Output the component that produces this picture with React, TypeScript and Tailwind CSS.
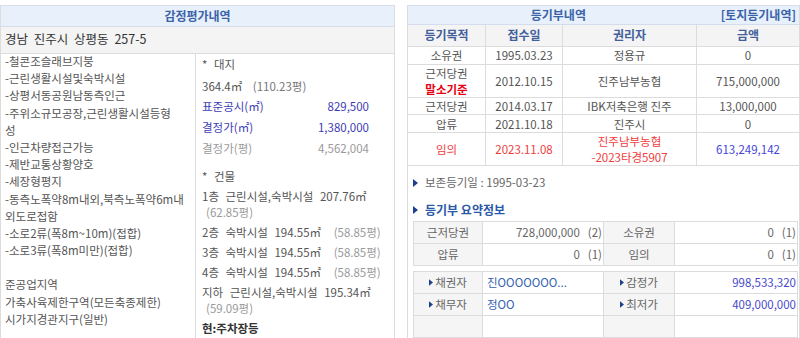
const leftLines = [
  '-철콘조슬래브지붕',
  '-근린생활시설및숙박시설',
  '-상평서동공원남동측인근',
  '-주위소규모공장,근린생활시설등형',
  '성',
  '-인근차량접근가능',
  '-제반교통상황양호',
  '-세장형평지',
  '-동측노폭약8m내외,북측노폭약6m내',
  '외도로접함',
  '-소로2류(폭8m~10m)(접합)',
  '-소로3류(폭8m미만)(접합)',
  '',
  '준공업지역',
  '가축사육제한구역(모든축종제한)',
  '시가지경관지구(일반)',
];

const registry = [
  { kind: '소유권', date: '1995.03.23', holder: '정용규', amount: '0', h: 'h-[23px]' },
  { kind: '근저당권', date: '2012.10.15', holder: '진주남부농협', amount: '715,000,000', h: 'h-[33px]', base: true },
  { kind: '근저당권', date: '2014.03.17', holder: 'IBK저축은행 진주', amount: '13,000,000', h: 'h-[22px]' },
  { kind: '압류', date: '2021.10.18', holder: '진주시', amount: '0', h: 'h-[22px]' },
];

function Arrow({ className = 'w-[5px] h-[8px]' }: { className?: string }) {
  return (
    <svg viewBox="0 0 5 8" className={className}>
      <path d="M0 0 L5 4 L0 8 Z" fill="#1d3f8c" />
    </svg>
  );
}

export default function App() {
  return (
    <div className="w-[800px] h-[338px] overflow-hidden bg-white pt-[5px] font-['Noto_Sans_CJK_KR',sans-serif] text-[11.5px] text-[#555]">
      <div className="flex h-full">
        {/* 감정평가내역 */}
        <div className="w-[395px] shrink-0 border-x border-[#dcdcdc] flex flex-col">
          <div className="h-[22px] bg-[#e8f0fb] border-y border-[#d3ddec] flex items-center justify-center text-[12px] font-bold text-[#3a63a8]">
            감정평가내역
          </div>
          <div className="h-[28px] bg-[#f4f4f4] border-b border-[#dcdcdc] flex items-center pl-[4px] text-[12.5px] text-[#333] [word-spacing:3px]">
            경남 진주시 상평동 257-5
          </div>
          <div className="flex flex-1">
            <div className="w-[195px] shrink-0 border-r border-[#dcdcdc] pl-[4px] -mt-[1px] leading-[17.2px] whitespace-nowrap">
              {leftLines.map((line, i) => (
                <div key={i} className="h-[17.2px]">
                  {line}
                </div>
              ))}
            </div>
            <div className="flex-1 pl-[6px] leading-[16px] whitespace-nowrap [word-spacing:4px]">
              <div className="py-[2px]">* 대지</div>
              <div className="py-[2px] mt-[2px]">
                364.4㎡ <span className="ml-[4px] text-[#777]">(110.23평)</span>
              </div>
              <div className="py-[2px] w-[167px] flex justify-between text-[#3c3cb4]">
                <span>표준공시(㎡)</span>
                <span>829,500</span>
              </div>
              <div className="py-[2px] mt-[1px] w-[167px] flex justify-between text-[#3c3cb4]">
                <span>결정가(㎡)</span>
                <span>1,380,000</span>
              </div>
              <div className="py-[2px] mt-[1px] w-[167px] flex justify-between text-[#9a9a9a]">
                <span>결정가(평)</span>
                <span>4,562,004</span>
              </div>
              <div className="py-[2px] mt-[8px]">* 건물</div>
              <div className="py-[2px]">
                <div>1층 근린시설,숙박시설 207.76㎡</div>
                <div className="pl-[4px] text-[#9a9a9a]">(62.85평)</div>
              </div>
              {['2층', '3층', '4층'].map((f) => (
                <div key={f} className="py-[2px]">
                  {f} 숙박시설 194.55㎡ <span className="ml-[6px] text-[#9a9a9a]">(58.85평)</span>
                </div>
              ))}
              <div className="py-[2px]">
                <div>지하 근린시설,숙박시설 195.34㎡</div>
                <div className="pl-[4px] text-[#9a9a9a]">(59.09평)</div>
              </div>
              <div className="py-[2px] font-bold text-[#333]">현:주차장등</div>
            </div>
          </div>
        </div>

        {/* 등기부내역 */}
        <div className="w-[393px] shrink-0 ml-[12px] border-x border-[#dcdcdc] flex flex-col">
          <div className="h-[22px] bg-[#e8f0fb] border-y border-[#d3ddec] flex items-center text-[12px] font-bold text-[#3a63a8]">
            <div className="flex-1 text-center">등기부내역</div>
            <div className="pl-[12px] pr-[3px]">[토지등기내역]</div>
          </div>

          <div className="grid grid-cols-[78px_77px_134px_1fr] h-[27px] bg-[#f4f4f4] border-b border-[#dcdcdc] text-[12px] font-bold text-[#42609c]">
            {['등기목적', '접수일', '권리자', '금액'].map((t, i) => (
              <div key={t} className={`flex items-center justify-center ${i < 3 ? 'border-r border-[#dcdcdc]' : ''}`}>
                {t}
              </div>
            ))}
          </div>

          {registry.map((r, idx) => (
            <div key={idx} className={`grid grid-cols-[78px_77px_134px_1fr] ${r.h} border-b border-[#dcdcdc] leading-[16px]`}>
              <div className="flex flex-col items-center justify-center border-r border-[#dcdcdc]">
                <span>{r.kind}</span>
                {r.base && <span className="font-bold text-[#e60012]">말소기준</span>}
              </div>
              <div className="flex items-center justify-center border-r border-[#dcdcdc]">{r.date}</div>
              <div className="flex items-center justify-center border-r border-[#dcdcdc]">{r.holder}</div>
              <div className="flex items-center justify-center">{r.amount}</div>
            </div>
          ))}
          <div className="grid grid-cols-[78px_77px_134px_1fr] h-[34px] border-b border-[#dcdcdc] leading-[16px] text-[#f03c3c]">
            <div className="flex items-center justify-center border-r border-[#dcdcdc]">임의</div>
            <div className="flex items-center justify-center border-r border-[#dcdcdc]">2023.11.08</div>
            <div className="flex flex-col items-center justify-center border-r border-[#dcdcdc]">
              <span>진주남부농협</span>
              <span>-2023타경5907</span>
            </div>
            <div className="flex items-center justify-center text-[#4545dc]">613,249,142</div>
          </div>

          <div className="pl-[5px]">
            <div className="h-[20px] mt-[7px] flex items-center gap-[7px]">
              <Arrow />
              <span className="text-[#666]">보존등기일 : 1995-03-23</span>
            </div>
            <div className="h-[20px] mt-[7px] flex items-center gap-[7px]">
              <Arrow />
              <span className="text-[12px] font-bold text-[#2a58a8]">등기부 요약정보</span>
            </div>

            <div className="mt-[1px] mr-[1px] border-t border-l border-[#dcdcdc] grid grid-cols-[69px_121px_71px_1fr] text-[#666]">
              {[
                ['근저당권', '728,000,000', '(2)', '소유권', '0', '(1)'],
                ['압류', '0', '(1)', '임의', '0', '(1)'],
              ].map((row) => (
                <div key={row[0]} className="contents">
                  <div className="h-[22px] bg-[#f5f5f5] border-r border-b border-[#dcdcdc] flex items-center justify-center">{row[0]}</div>
                  <div className="h-[22px] border-r border-b border-[#dcdcdc] flex items-center justify-end pr-[1px]">
                    {row[1]}
                    <span className="ml-[8px]">{row[2]}</span>
                  </div>
                  <div className="h-[22px] bg-[#f5f5f5] border-r border-b border-[#dcdcdc] flex items-center justify-center">{row[3]}</div>
                  <div className="h-[22px] border-r border-b border-[#dcdcdc] flex items-center justify-end pr-[1px]">
                    {row[4]}
                    <span className="ml-[8px]">{row[5]}</span>
                  </div>
                </div>
              ))}
            </div>

            <div className="mt-[5px] mr-[1px] border-t border-l border-[#dcdcdc] grid grid-cols-[69px_121px_71px_1fr] text-[#666]">
              {[
                ['채권자', '진OOOOOOO...', '감정가', '998,533,320'],
                ['채무자', '정OO', '최저가', '409,000,000'],
                ['', '', '', ''],
              ].map((row, i) => (
                <div key={i} className="contents">
                  <div className="h-[22px] bg-[#f5f5f5] border-r border-b border-[#dcdcdc] flex items-center justify-center gap-[2px]">
                    {row[0] && <Arrow className="w-[4px] h-[7px]" />}
                    {row[0]}
                  </div>
                  <div className="h-[22px] border-r border-b border-[#dcdcdc] flex items-center pl-[4px] text-[#3362b0]">{row[1]}</div>
                  <div className="h-[22px] bg-[#f5f5f5] border-r border-b border-[#dcdcdc] flex items-center justify-center gap-[2px]">
                    {row[2] && <Arrow className="w-[4px] h-[7px]" />}
                    {row[2]}
                  </div>
                  <div className="h-[22px] border-r border-b border-[#dcdcdc] flex items-center justify-end pr-[1px] text-[#4848cc]">{row[3]}</div>
                </div>
              ))}
            </div>
          </div>
        </div>
      </div>
    </div>
  );
}
